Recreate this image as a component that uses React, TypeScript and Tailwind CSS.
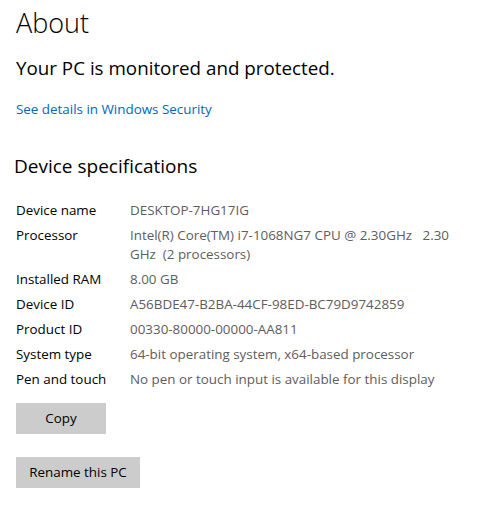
import React from "react";

const rows: [string, string][] = [
  ["Device name", "DESKTOP-7HG17IG"],
  ["Processor", "Intel(R) Core(TM) i7-1068NG7 CPU @ 2.30GHz   2.30\nGHz  (2 processors)"],
  ["Installed RAM", "8.00 GB"],
  ["Device ID", "A56BDE47-B2BA-44CF-98ED-BC79D9742859"],
  ["Product ID", "00330-80000-00000-AA811"],
  ["System type", "64-bit operating system, x64-based processor"],
  ["Pen and touch", "No pen or touch input is available for this display"],
];

export default function App() {
  return (
    <div
      className="w-[493px] h-[519px] bg-white text-black overflow-hidden pl-4"
      style={{ fontFamily: '"Open Sans", "Noto Sans", sans-serif' }}
    >
      <h1 className="text-[27px] leading-[36px] font-light pt-[5px]">About</h1>
      <h2 className="text-[18.8px] leading-[26px] mt-[14px]">Your PC is monitored and protected.</h2>
      <a className="block text-[13.4px] leading-[20px] text-[#0067c0] mt-[18px]">See details in Windows Security</a>
      <h2 className="text-[19px] leading-[26px] mt-[34px] -ml-[2px]">Device specifications</h2>
      <div className="mt-[22px] flex flex-col gap-[6px] text-[13.4px] leading-[19px]">
        {rows.map(([k, v]) => (
          <div key={k} className="flex">
            <div className="w-[114px] shrink-0">{k}</div>
            <div className="text-[#5d5d5d] whitespace-pre">{v}</div>
          </div>
        ))}
      </div>
      <button className="block mt-[14px] w-[90px] h-[31px] bg-[#cccccc] text-[13.4px]">Copy</button>
      <button className="block mt-[23px] w-[124px] h-[31px] bg-[#cccccc] text-[13.4px]">Rename this PC</button>
    </div>
  );
}
